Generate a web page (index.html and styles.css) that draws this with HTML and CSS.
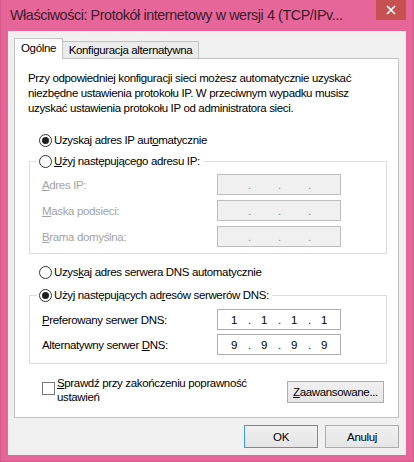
FILE: index.html
```html
<!DOCTYPE html>
<html lang="pl">

<head>
  <meta charset="UTF-8" />
  <meta name="viewport" content="width=device-width, initial-scale=1" />
  <title>Właściwości: Protokół internetowy w wersji 4 (TCP/IPv4)</title>
  <link rel="stylesheet" href="styles.css">
</head>

<body>

  <div class="window">
    <div class="titlebar">
      <span class="title">Właściwości: Protokół internetowy w wersji 4 (TCP/IPv...</span>
      <button class="close" aria-label="Zamknij">
        <svg width="10" height="10" viewBox="0 0 10 10">
          <path d="M1 1 L9 9 M9 1 L1 9" stroke="#fff" stroke-width="1.7" fill="none" />
        </svg>
      </button>
    </div>

    <div class="client">
      <div class="tabs">
        <div class="tab active">Ogólne</div>
        <div class="tab">Konfiguracja alternatywna</div>
      </div>

      <div class="panel">
        <p class="intro">
          Przy odpowiedniej konfiguracji sieci możesz automatycznie uzyskać<br>
          niezbędne ustawienia protokołu IP. W przeciwnym wypadku musisz<br>
          uzyskać ustawienia protokołu IP od administratora sieci.
        </p>

        <div class="option first"><span class="radio checked"></span>Uzyskaj adres IP aut<u>o</u>matycznie</div>

        <fieldset class="group">
          <legend><span class="radio"></span><u>U</u>żyj następującego adresu IP:</legend>
          <div class="row off">
            <span class="label"><u>A</u>dres IP:</span>
            <div class="ip"><span></span><span class="dot">.</span><span></span><span class="dot">.</span><span></span><span class="dot">.</span><span></span></div>
          </div>
          <div class="row off">
            <span class="label"><u>M</u>aska podsieci:</span>
            <div class="ip"><span></span><span class="dot">.</span><span></span><span class="dot">.</span><span></span><span class="dot">.</span><span></span></div>
          </div>
          <div class="row off">
            <span class="label"><u>B</u>rama domyślna:</span>
            <div class="ip"><span></span><span class="dot">.</span><span></span><span class="dot">.</span><span></span><span class="dot">.</span><span></span></div>
          </div>
        </fieldset>

        <div class="option dns"><span class="radio"></span>Uzys<u>k</u>aj adres serwera DNS automatycznie</div>

        <fieldset class="group dns-group">
          <legend><span class="radio checked"></span>Użyj następujących ad<u>r</u>esów serwerów DNS:</legend>
          <div class="row">
            <span class="label"><u>P</u>referowany serwer DNS:</span>
            <div class="ip"><span>1</span><span class="dot">.</span><span>1</span><span class="dot">.</span><span>1</span><span class="dot">.</span><span>1</span></div>
          </div>
          <div class="row">
            <span class="label">Alternatywny serwer <u>D</u>NS:</span>
            <div class="ip"><span>9</span><span class="dot">.</span><span>9</span><span class="dot">.</span><span>9</span><span class="dot">.</span><span>9</span></div>
          </div>
        </fieldset>

        <div class="bottom">
          <div class="check">
            <span class="box"></span>
            <span><u>S</u>prawdź przy zakończeniu poprawność<br>ustawień</span>
          </div>
          <button class="btn advanced"><u>Z</u>aawansowane...</button>
        </div>
      </div>

      <div class="actions">
        <button class="btn default">OK</button>
        <button class="btn">Anuluj</button>
      </div>
    </div>
  </div>

</body>

</html>
```

FILE: styles.css
```css
* {
  box-sizing: border-box;
}

html,
body {
  margin: 0;
  padding: 0;
}

body {
  font-family: 'Liberation Sans', Arial, sans-serif;
  font-size: 11.5px;
  letter-spacing: -0.35px;
  color: #000;
  background: #e6669a;
}

.window {
  width: 414px;
  height: 462px;
  background: #e6669a;
  border: 1px solid #d65a8c;
  border-top: none;
}

.titlebar {
  height: 31px;
  display: flex;
  align-items: flex-start;
}

.title {
  padding: 7px 0 0 9px;
  font-size: 14.3px;
  letter-spacing: -0.4px;
  line-height: 17px;
  color: #3a1d2b;
  white-space: nowrap;
}

.close {
  margin-left: auto;
  margin-right: 7px;
  width: 30px;
  height: 20px;
  padding: 0;
  border: none;
  background: #c75050;
  display: flex;
  align-items: center;
  justify-content: center;
}

.client {
  margin: 0 7px;
  height: 424px;
  background: #f0f0f0;
  padding: 7px 7px 0 6px;
}

.tabs {
  display: flex;
  align-items: flex-end;
  height: 20px;
}

.tab {
  width: 137px;
  height: 17px;
  margin-left: -1px;
  border: 1px solid #c2c2c2;
  border-bottom: none;
  background: #ebebeb;
  line-height: 16px;
  text-align: center;
}

.tab.active {
  width: 49px;
  height: 21px;
  margin-left: 0;
  margin-bottom: -1px;
  background: #fff;
  line-height: 19px;
  position: relative;
  z-index: 1;
}

.panel {
  height: 360px;
  border: 1px solid #c2c2c2;
  background: #fff;
  padding: 12px 11px 0 14px;
}

.intro {
  margin: 0 0 0 -1px;
  line-height: 15px;
}

.option {
  display: flex;
  align-items: center;
  height: 20px;
  margin: 14px 0 0 10px;
}

.option.dns {
  margin-top: 8px;
}

.radio {
  flex: none;
  width: 13px;
  height: 13px;
  margin-right: 2px;
  border: 1px solid #333;
  border-radius: 50%;
  background: #fff;
  display: flex;
  align-items: center;
  justify-content: center;
}

.radio.checked::after {
  content: "";
  width: 7px;
  height: 7px;
  border-radius: 50%;
  background: #1f1f1f;
}

.group {
  width: 358px;
  min-width: 0;
  margin: 4px 0 0;
  padding: 6px 0 6px 12px;
  border: 1px solid #dcdcdc;
}

.group.dns-group {
  margin-top: 6px;
  padding-top: 7px;
  padding-bottom: 8px;
}

.group legend {
  display: flex;
  align-items: center;
  height: 14px;
  line-height: 14px;
  margin-left: -5px;
  padding: 0 3px 0 2px;
}

.row {
  display: flex;
  align-items: center;
  height: 21px;
}

.row + .row {
  margin-top: 5px;
}

.dns-group .row + .row {
  margin-top: 4px;
}

.label {
  width: 175px;
}

.ip {
  width: 124px;
  height: 21px;
  padding: 0 2px;
  border: 1px solid #adadad;
  background: #fff;
  display: flex;
  align-items: center;
}

.ip span {
  width: 28px;
  text-align: center;
}

.ip .dot {
  width: 2px;
  text-align: left;
}

.row.off {
  color: #a3a3a3;
}

.row.off .ip {
  background: #f0f0f0;
  border-color: #bdbdbd;
  color: #8c8c8c;
}

.bottom {
  display: flex;
  align-items: flex-start;
  margin-top: 12px;
}

.check {
  display: flex;
  align-items: flex-start;
  margin-left: 13px;
  line-height: 14px;
}

.box {
  flex: none;
  width: 13px;
  height: 13px;
  margin: 6px 2px 0 0;
  border: 1px solid #7a7a7a;
  background: #fff;
}

.btn {
  font: inherit;
  letter-spacing: inherit;
  color: #000;
  height: 23px;
  width: 74px;
  padding: 0;
  border: 1px solid #acacac;
  background: linear-gradient(#f0f0f0, #e5e5e5);
}

.btn.advanced {
  width: 97px;
  height: 22px;
  margin: 5px 3px 0 auto;
}

.btn.default {
  border-color: #3c9be8;
}

.actions {
  display: flex;
  justify-content: flex-end;
  gap: 7px;
  margin-top: 7px;
}
```
